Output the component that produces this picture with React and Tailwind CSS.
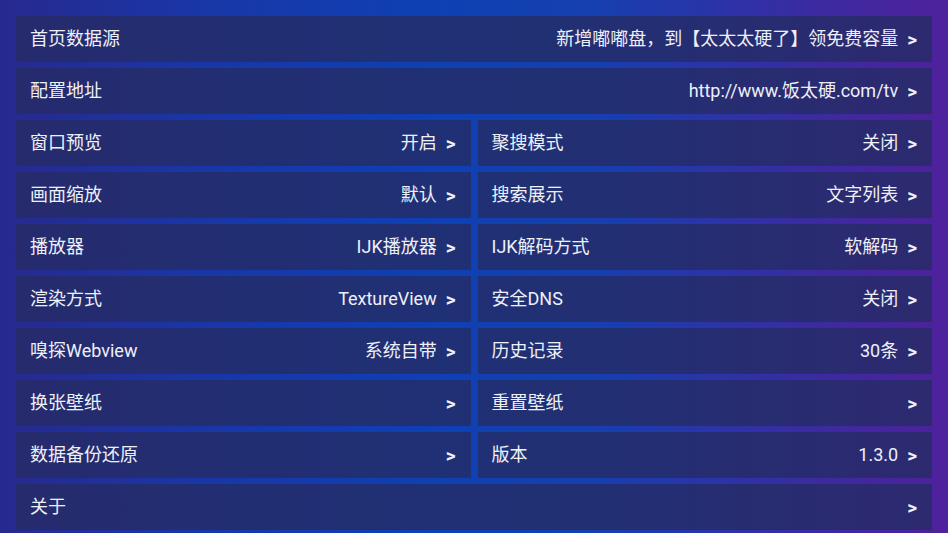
import React from "react";

const Row = ({ label, value, className = "" }) => (
  <div className={`flex h-[46px] items-center justify-between bg-[rgba(38,44,100,0.8)] pl-[14px] pr-[15px] ${className}`}>
    <span>{label}</span>
    <span className="flex items-center">
      {value ? <span>{value}</span> : null}
      <span className="ml-[9px] text-[19px] font-bold">&gt;</span>
    </span>
  </div>
);

export default function App() {
  const pairs = [
    [["窗口预览", "开启"], ["聚搜模式", "关闭"]],
    [["画面缩放", "默认"], ["搜索展示", "文字列表"]],
    [["播放器", "IJK播放器"], ["IJK解码方式", "软解码"]],
    [["渲染方式", "TextureView"], ["安全DNS", "关闭"]],
    [["嗅探Webview", "系统自带"], ["历史记录", "30条"]],
    [["换张壁纸", ""], ["重置壁纸", ""]],
    [["数据备份还原", ""], ["版本", "1.3.0"]],
  ];
  return (
    <div
      className="h-[533px] w-[948px] overflow-hidden bg-[linear-gradient(90deg,#27298f_0%,#1a36a6_20%,#0e40b4_45%,#1540b0_62%,#3a2ba2_85%,#4f219c_100%)] px-4 pt-4 text-[18px] leading-none text-[#eef0f8]"
      style={{ fontFamily: "Roboto, 'Noto Sans CJK SC', sans-serif" }}
    >
      <div className="flex flex-col gap-[6px]">
        <Row label="首页数据源" value="新增嘟嘟盘，到【太太太硬了】领免费容量" />
        <Row label="配置地址" value="http://www.饭太硬.com/tv" />
        {pairs.map((p, i) => (
          <div key={i} className="grid grid-cols-2 gap-[7px]">
            <Row label={p[0][0]} value={p[0][1]} />
            <Row label={p[1][0]} value={p[1][1]} />
          </div>
        ))}
        <Row label="关于" value="" />
      </div>
    </div>
  );
}
